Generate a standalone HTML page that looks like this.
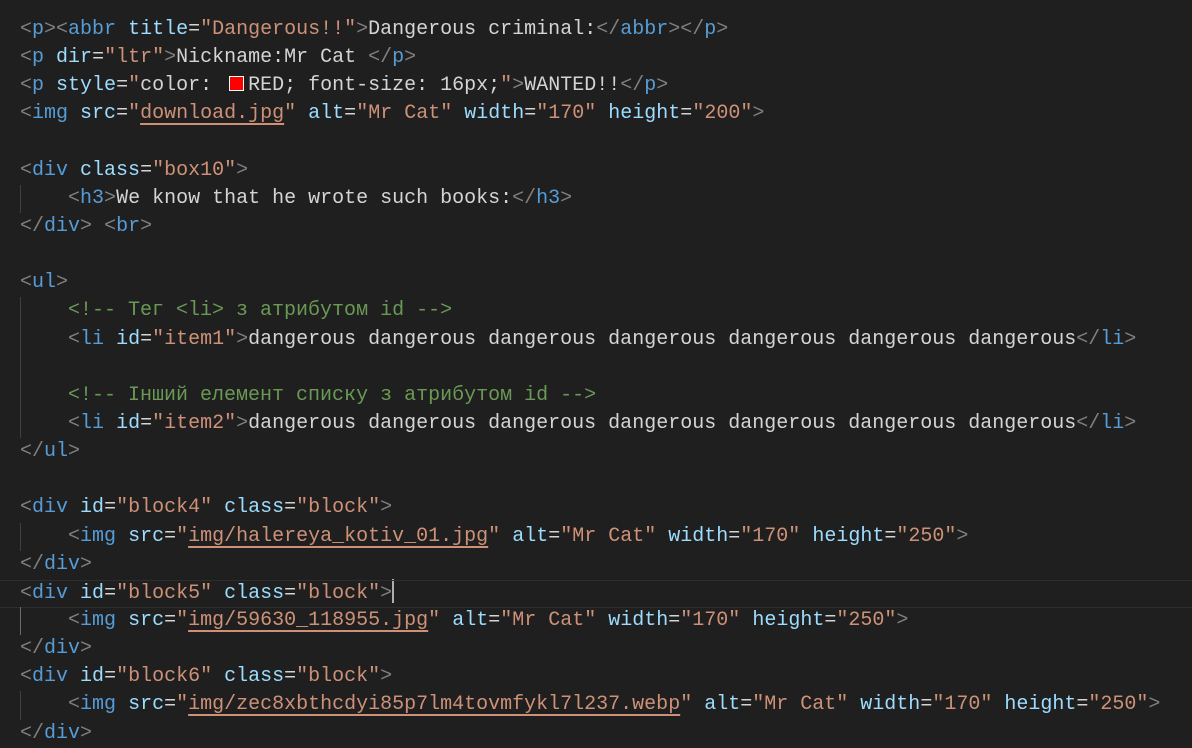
<!DOCTYPE html>
<html><head><meta charset="utf-8"><style>
body{margin:0;width:1192px;height:726px;background:#1f1f1f;overflow:hidden;position:relative}
.ed{position:absolute;left:20px;top:16px;font-family:"Liberation Mono","DejaVu Sans Mono",monospace;font-size:20px;line-height:28.15px;color:#d4d4d4}
.l{height:28.15px;position:relative;white-space:pre}
.g{color:#808080}.t{color:#569cd6}.a{color:#9cdcfe}.s{color:#ce9178}.c{color:#6a9955}
.u{text-decoration:underline;text-decoration-color:#ce9178;text-underline-offset:5px;text-decoration-thickness:2px}
.box{display:inline-block;width:13px;height:13px;background:#f00;border:1px solid #fff;margin:0 4px 0 5px;vertical-align:-1px}
.ig{position:absolute;left:0;top:0;width:1px;height:28.15px;background:#404040}
.cur{position:absolute;left:-20px;width:1192px;height:26px;border-top:1px solid #2e2e2e;border-bottom:1px solid #2e2e2e;top:1px}
.caret{display:inline-block;width:2px;height:24px;background:#aeafad;vertical-align:-5px}
</style></head><body><div class="ed"><div class="l"><span class="g">&lt;</span><span class="t">p</span><span class="g">&gt;&lt;</span><span class="t">abbr</span> <span class="a">title</span>=<span class="s">"Dangerous!!"</span><span class="g">&gt;</span>Dangerous criminal:<span class="g">&lt;/</span><span class="t">abbr</span><span class="g">&gt;&lt;/</span><span class="t">p</span><span class="g">&gt;</span></div>
<div class="l"><span class="g">&lt;</span><span class="t">p</span> <span class="a">dir</span>=<span class="s">"ltr"</span><span class="g">&gt;</span>Nickname:Mr Cat <span class="g">&lt;/</span><span class="t">p</span><span class="g">&gt;</span></div>
<div class="l"><span class="g">&lt;</span><span class="t">p</span> <span class="a">style</span>=<span class="s">"</span>color: <span class="box"></span>RED; font-size: 16px;<span class="s">"</span><span class="g">&gt;</span>WANTED!!<span class="g">&lt;/</span><span class="t">p</span><span class="g">&gt;</span></div>
<div class="l"><span class="g">&lt;</span><span class="t">img</span> <span class="a">src</span>=<span class="s">"<span class="u">download.jpg</span>"</span> <span class="a">alt</span>=<span class="s">"Mr Cat"</span> <span class="a">width</span>=<span class="s">"170"</span> <span class="a">height</span>=<span class="s">"200"</span><span class="g">&gt;</span></div>
<div class="l"></div>
<div class="l"><span class="g">&lt;</span><span class="t">div</span> <span class="a">class</span>=<span class="s">"box10"</span><span class="g">&gt;</span></div>
<div class="l"><span class="ig"></span>    <span class="g">&lt;</span><span class="t">h3</span><span class="g">&gt;</span>We know that he wrote such books:<span class="g">&lt;/</span><span class="t">h3</span><span class="g">&gt;</span></div>
<div class="l"><span class="g">&lt;/</span><span class="t">div</span><span class="g">&gt;</span> <span class="g">&lt;</span><span class="t">br</span><span class="g">&gt;</span></div>
<div class="l"></div>
<div class="l"><span class="g">&lt;</span><span class="t">ul</span><span class="g">&gt;</span></div>
<div class="l"><span class="ig"></span>    <span class="c">&lt;!-- Тег &lt;li&gt; з атрибутом id --&gt;</span></div>
<div class="l"><span class="ig"></span>    <span class="g">&lt;</span><span class="t">li</span> <span class="a">id</span>=<span class="s">"item1"</span><span class="g">&gt;</span>dangerous dangerous dangerous dangerous dangerous dangerous dangerous<span class="g">&lt;/</span><span class="t">li</span><span class="g">&gt;</span></div>
<div class="l"><span class="ig"></span></div>
<div class="l"><span class="ig"></span>    <span class="c">&lt;!-- Інший елемент списку з атрибутом id --&gt;</span></div>
<div class="l"><span class="ig"></span>    <span class="g">&lt;</span><span class="t">li</span> <span class="a">id</span>=<span class="s">"item2"</span><span class="g">&gt;</span>dangerous dangerous dangerous dangerous dangerous dangerous dangerous<span class="g">&lt;/</span><span class="t">li</span><span class="g">&gt;</span></div>
<div class="l"><span class="g">&lt;/</span><span class="t">ul</span><span class="g">&gt;</span></div>
<div class="l"></div>
<div class="l"><span class="g">&lt;</span><span class="t">div</span> <span class="a">id</span>=<span class="s">"block4"</span> <span class="a">class</span>=<span class="s">"block"</span><span class="g">&gt;</span></div>
<div class="l"><span class="ig"></span>    <span class="g">&lt;</span><span class="t">img</span> <span class="a">src</span>=<span class="s">"<span class="u">img/halereya_kotiv_01.jpg</span>"</span> <span class="a">alt</span>=<span class="s">"Mr Cat"</span> <span class="a">width</span>=<span class="s">"170"</span> <span class="a">height</span>=<span class="s">"250"</span><span class="g">&gt;</span></div>
<div class="l"><span class="g">&lt;/</span><span class="t">div</span><span class="g">&gt;</span></div>
<div class="l"><span class="cur"></span><span class="g">&lt;</span><span class="t">div</span> <span class="a">id</span>=<span class="s">"block5"</span> <span class="a">class</span>=<span class="s">"block"</span><span class="g">&gt;</span><span class="caret"></span></div>
<div class="l"><span class="ig" style="background:#6a6a6a"></span>    <span class="g">&lt;</span><span class="t">img</span> <span class="a">src</span>=<span class="s">"<span class="u">img/59630_118955.jpg</span>"</span> <span class="a">alt</span>=<span class="s">"Mr Cat"</span> <span class="a">width</span>=<span class="s">"170"</span> <span class="a">height</span>=<span class="s">"250"</span><span class="g">&gt;</span></div>
<div class="l"><span class="g">&lt;/</span><span class="t">div</span><span class="g">&gt;</span></div>
<div class="l"><span class="g">&lt;</span><span class="t">div</span> <span class="a">id</span>=<span class="s">"block6"</span> <span class="a">class</span>=<span class="s">"block"</span><span class="g">&gt;</span></div>
<div class="l"><span class="ig"></span>    <span class="g">&lt;</span><span class="t">img</span> <span class="a">src</span>=<span class="s">"<span class="u">img/zec8xbthcdyi85p7lm4tovmfykl7l237.webp</span>"</span> <span class="a">alt</span>=<span class="s">"Mr Cat"</span> <span class="a">width</span>=<span class="s">"170"</span> <span class="a">height</span>=<span class="s">"250"</span><span class="g">&gt;</span></div>
<div class="l"><span class="g">&lt;/</span><span class="t">div</span><span class="g">&gt;</span></div></div></body></html>
